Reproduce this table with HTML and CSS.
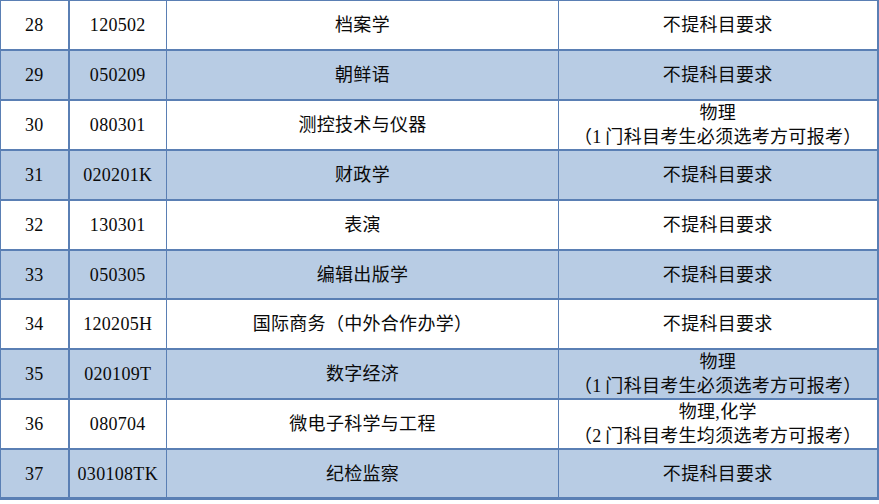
FILE: index.html
```html
<!DOCTYPE html>
<html lang="zh-CN">
<head>
<meta charset="utf-8">
<title>专业选科要求</title>
<link rel="stylesheet" href="styles.css">
</head>
<body>
<table class="grid">
  <colgroup>
    <col class="c-no">
    <col class="c-code">
    <col class="c-name">
    <col class="c-req">
  </colgroup>
  <tbody>
    <tr class="row first"><td>28</td><td>120502</td><td>档案学</td><td>不提科目要求</td></tr>
    <tr class="row alt"><td>29</td><td>050209</td><td>朝鲜语</td><td>不提科目要求</td></tr>
    <tr class="row"><td>30</td><td>080301</td><td>测控技术与仪器</td><td class="two">物理<br>（1 门科目考生必须选考方可报考）</td></tr>
    <tr class="row alt"><td>31</td><td>020201K</td><td>财政学</td><td>不提科目要求</td></tr>
    <tr class="row"><td>32</td><td>130301</td><td>表演</td><td>不提科目要求</td></tr>
    <tr class="row alt short"><td>33</td><td>050305</td><td>编辑出版学</td><td>不提科目要求</td></tr>
    <tr class="row"><td>34</td><td>120205H</td><td>国际商务（中外合作办学）</td><td>不提科目要求</td></tr>
    <tr class="row alt"><td>35</td><td>020109T</td><td>数字经济</td><td class="two">物理<br>（1 门科目考生必须选考方可报考）</td></tr>
    <tr class="row"><td>36</td><td>080704</td><td>微电子科学与工程</td><td class="two">物理,化学<br>（2 门科目考生均须选考方可报考）</td></tr>
    <tr class="row alt last short"><td>37</td><td>030108TK</td><td>纪检监察</td><td>不提科目要求</td></tr>
  </tbody>
</table>
</body>
</html>
```

FILE: styles.css
```css
html, body {
  margin: 0;
  padding: 0;
  background: #ffffff;
}

.grid {
  border-collapse: collapse;
  table-layout: fixed;
  width: 877px;
  font-family: "Liberation Serif", "Noto Sans CJK SC", serif;
  font-size: 18px;
  color: #0a0a0a;
}

.c-no { width: 68px; }
.c-code { width: 98px; }
.c-name { width: 392px; }
.c-req { width: 319px; }

.row td {
  height: 48px;
  padding: 0;
  text-align: center;
  vertical-align: middle;
  letter-spacing: 0.3px;
  border-left: 1px solid #5a7fb4;
  border-right: 1px solid #5a7fb4;
  border-bottom: 2px solid #5a7fb4;
  line-height: 24px;
}

.row td:first-child {
  border-right: 2px solid #5a7fb4;
}

.row td:last-child {
  border-right: 2px solid #5a7fb4;
}

.row.first td {
  border-top: 1px solid #5a7fb4;
  height: 48px;
}

.row.short td {
  height: 47px;
}

.row.last td {
  border-bottom: 3px solid #5a7fb4;
}

.row.alt td {
  background: #b8cce4;
}

.row td.two {
  line-height: 24px;
  word-spacing: -1px;
}
```
